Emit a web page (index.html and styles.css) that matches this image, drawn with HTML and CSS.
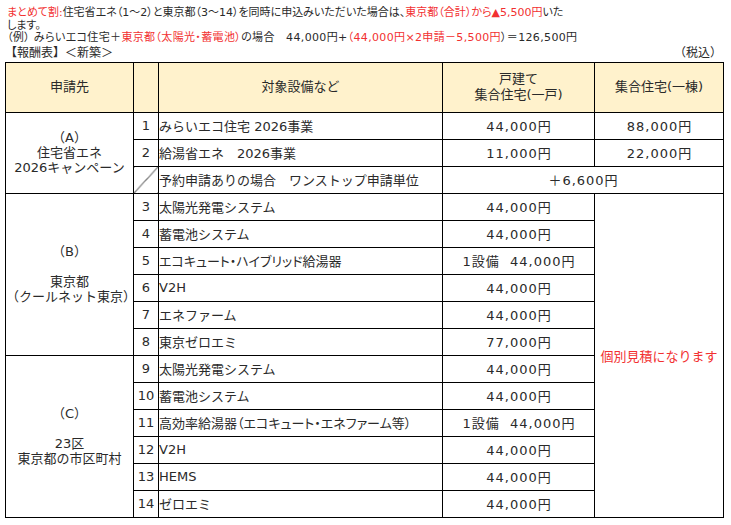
FILE: index.html
```html
<!DOCTYPE html>
<html lang="ja">
<head>
<meta charset="utf-8">
<title>報酬表</title>
<link rel="stylesheet" href="styles.css">
</head>
<body>
<div class="page">
  <div class="notes">
    <p class="note"><span class="red">まとめて割:</span>住宅省エネ（1～2）と東京都（3～14）を同時に申込みいただいた場合は、<span class="red">東京都（合計）から▲5,500円</span>いた<br>します。</p>
    <p class="note wide">（例） みらいエコ住宅＋<span class="red">東京都（太陽光・蓄電池）</span>の場合　44,000円+<span class="red">（44,000円×2申請－5,500円</span>）＝126,500円</p>
  </div>
  <div class="caption"><span>【報酬表】＜新築＞</span><span>（税込）</span></div>
  <table class="fee">
    <colgroup>
      <col class="c-org">
      <col class="c-no">
      <col class="c-item">
      <col class="c-house">
      <col class="c-bldg">
    </colgroup>
    <thead>
      <tr class="head">
        <th>申請先</th>
        <th></th>
        <th>対象設備など</th>
        <th>戸建て<br>集合住宅(一戸)</th>
        <th>集合住宅(一棟)</th>
      </tr>
    </thead>
    <tbody>
      <tr>
        <td rowspan="3" class="org">（A）<br>住宅省エネ<br>2026キャンペーン</td>
        <td class="no">1</td>
        <td class="item">みらいエコ住宅 2026事業</td>
        <td class="val">44,000円</td>
        <td class="val">88,000円</td>
      </tr>
      <tr>
        <td class="no">2</td>
        <td class="item">給湯省エネ　2026事業</td>
        <td class="val">11,000円</td>
        <td class="val">22,000円</td>
      </tr>
      <tr>
        <td class="no diag"></td>
        <td class="item">予約申請ありの場合　ワンストップ申請単位</td>
        <td class="val" colspan="2">＋6,600円</td>
      </tr>
      <tr>
        <td rowspan="6" class="org">（B）<br>&nbsp;<br>東京都<br>（クールネット東京）</td>
        <td class="no">3</td>
        <td class="item">太陽光発電システム</td>
        <td class="val">44,000円</td>
        <td rowspan="12" class="estimate">個別見積になります</td>
      </tr>
      <tr>
        <td class="no">4</td>
        <td class="item">蓄電池システム</td>
        <td class="val">44,000円</td>
      </tr>
      <tr>
        <td class="no">5</td>
        <td class="item prop">エコキュート・ハイブリッド給湯器</td>
        <td class="val">1設備&nbsp;&nbsp;44,000円</td>
      </tr>
      <tr>
        <td class="no">6</td>
        <td class="item">V2H</td>
        <td class="val">44,000円</td>
      </tr>
      <tr>
        <td class="no">7</td>
        <td class="item">エネファーム</td>
        <td class="val">44,000円</td>
      </tr>
      <tr>
        <td class="no">8</td>
        <td class="item">東京ゼロエミ</td>
        <td class="val">77,000円</td>
      </tr>
      <tr>
        <td rowspan="6" class="org">（C）<br>&nbsp;<br>23区<br>東京都の市区町村</td>
        <td class="no">9</td>
        <td class="item">太陽光発電システム</td>
        <td class="val">44,000円</td>
      </tr>
      <tr>
        <td class="no">10</td>
        <td class="item">蓄電池システム</td>
        <td class="val">44,000円</td>
      </tr>
      <tr>
        <td class="no">11</td>
        <td class="item prop">高効率給湯器（エコキュート・エネファーム等）</td>
        <td class="val">1設備&nbsp;&nbsp;44,000円</td>
      </tr>
      <tr>
        <td class="no">12</td>
        <td class="item">V2H</td>
        <td class="val">44,000円</td>
      </tr>
      <tr>
        <td class="no">13</td>
        <td class="item">HEMS</td>
        <td class="val">44,000円</td>
      </tr>
      <tr>
        <td class="no">14</td>
        <td class="item">ゼロエミ</td>
        <td class="val">44,000円</td>
      </tr>
    </tbody>
  </table>
</div>
</body>
</html>
```

FILE: styles.css
```css
html, body {
  margin: 0;
  padding: 0;
  background: #ffffff;
}

body {
  font-family: "DejaVu Sans", "Noto Sans CJK JP", sans-serif;
  color: #2a2a2a;
}

.page {
  width: 731px;
  padding: 7px 0 0 0;
  box-sizing: border-box;
}

.notes {
  padding-left: 7px;
}

.note {
  margin: 0;
  font-size: 11px;
  line-height: 12.5px;
  font-feature-settings: "palt";
}

.note.wide {
  letter-spacing: 0.35px;
}

.red {
  color: #f23030;
}

.caption {
  display: flex;
  justify-content: space-between;
  padding: 0 9px 0 5px;
  font-size: 12px;
  line-height: 17px;
  height: 17px;
}

.fee {
  margin-left: 5px;
  width: 718px;
  border-collapse: collapse;
  table-layout: fixed;
  font-size: 13px;
}

.c-org { width: 128px; }
.c-no { width: 25px; }
.c-item { width: 284px; }
.c-house { width: 152px; }
.c-bldg { width: 129px; }

.fee th,
.fee td {
  border: 1px solid #000;
  padding: 0;
  font-weight: normal;
}

.head {
  height: 50px;
  background: #fff2cc;
}

.head th {
  text-align: center;
  vertical-align: middle;
  line-height: 16px;
}

.fee tbody tr {
  height: 27px;
}

.org {
  text-align: center;
  vertical-align: middle;
  line-height: 15px;
}

.no {
  text-align: center;
}

.item {
  padding-left: 3px;
  text-align: left;
  white-space: nowrap;
}

.prop {
  font-feature-settings: "palt";
}

.val {
  text-align: center;
  letter-spacing: 1px;
  text-indent: 1px;
}

.estimate {
  text-align: center;
  vertical-align: middle;
  color: #f23030;
}

.diag {
  background: linear-gradient(to bottom right, transparent calc(50% - 0.6px), #000 50%, transparent calc(50% + 0.6px));
}
```
